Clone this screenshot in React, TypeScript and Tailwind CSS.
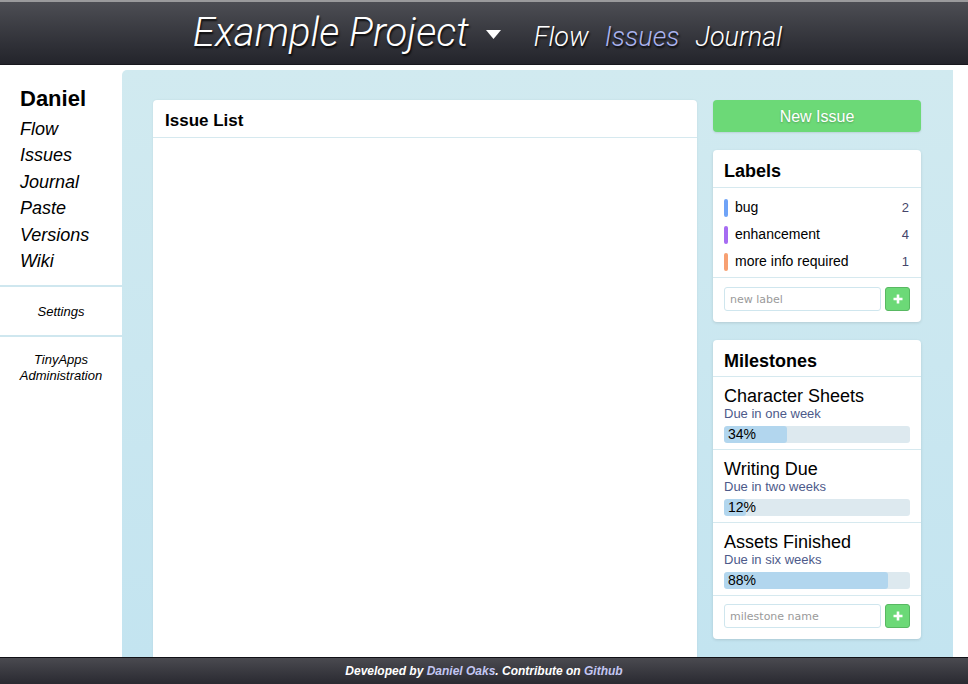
import * as React from 'react';

const labels = [
    { name: 'bug', count: 2, color: 'bg-[#6fa3f7]' },
    { name: 'enhancement', count: 4, color: 'bg-[#a66cf2]' },
    { name: 'more info required', count: 1, color: 'bg-[#f7a072]' },
];

const milestones = [
    { name: 'Character Sheets', due: 'Due in one week', pct: 34 },
    { name: 'Writing Due', due: 'Due in two weeks', pct: 12 },
    { name: 'Assets Finished', due: 'Due in six weeks', pct: 88 },
];

const sideLinks = ['Flow', 'Issues', 'Journal', 'Paste', 'Versions', 'Wiki'];

function PlusButton() {
    return (
        <button className="w-[25px] h-[24px] rounded-[3px] bg-[#6cd977] border border-[#58b862] flex items-center justify-center">
            <svg width="12" height="12" viewBox="0 0 12 12">
                <path d="M6 1.5v9M1.5 6h9" stroke="white" strokeWidth="2.6" strokeLinecap="butt" />
            </svg>
        </button>
    );
}

function AddRow({ placeholder, tight }: { placeholder: string; tight?: boolean }) {
    return (
        <div className={tight ? "flex items-center gap-[4px] px-[11px] pt-[8px] pb-[11px]" : "flex items-center gap-[4px] px-[11px] pt-[9px] pb-[11px]"}>
            <input
                placeholder={placeholder}
                className="w-[158px] h-[24px] rounded-[3px] border border-[#cfe6ee] px-[5px] text-[11px] font-['DejaVu_Sans',sans-serif] placeholder:text-[#9a9a9a] outline-none"
            />
            <PlusButton />
        </div>
    );
}

export default function App() {
    return (
        <div className="h-[684px] w-[968px] flex flex-col overflow-hidden bg-white font-['Liberation_Sans',Arial,sans-serif] text-black">
            {/* top bar */}
            <header className="h-[65px] shrink-0 border-t-2 border-[#9a9a9c] bg-gradient-to-b from-[#4d4e54] to-[#23242b] border-b border-b-[#18181e] flex items-center justify-center">
                <div className="flex items-baseline ml-[7px] [text-shadow:1px_2px_2px_rgba(0,0,0,0.85)]">
                    <span className="font-['Roboto',sans-serif] font-light italic text-[40px] text-white">Example Project</span>
                    <svg className="ml-[17px] mr-[33px] self-center mt-[4px]" width="15" height="10" viewBox="0 0 15 10">
                        <path d="M0 0h15L7.5 9z" fill="white" />
                    </svg>
                    <nav className="flex gap-[16px] font-['Roboto',sans-serif] font-light italic text-[27px]">
                        <span className="text-white">Flow</span>
                        <span className="text-[#aab3ee]">Issues</span>
                        <span className="text-white">Journal</span>
                    </nav>
                </div>
            </header>

            <div className="flex flex-1 min-h-0">
                {/* sidebar */}
                <aside className="w-[122px] shrink-0 pt-[20px]">
                    <div className="px-[20px]">
                        <div className="font-bold text-[22px] leading-[28px]">Daniel</div>
                        <ul className="mt-[3px] italic text-[18px] leading-[26.4px]">
                            {sideLinks.map((l) => (
                                <li key={l}>{l}</li>
                            ))}
                        </ul>
                    </div>
                    <div className="mt-[11px] h-[2px] bg-[#cfe7ef]" />
                    <div className="h-[48px] flex items-center justify-center italic text-[13px]">Settings</div>
                    <div className="h-[2px] bg-[#cfe7ef]" />
                    <div className="pt-[15px] text-center italic text-[13px] leading-[16px]">
                        TinyApps
                        <br />
                        Administration
                    </div>
                </aside>

                {/* main */}
                <main className="mt-[5px] w-[831px] rounded-tl-[5px] bg-gradient-to-b from-[#d1eaf0] to-[#c3e4f0] pl-[31px] pr-[32px] pt-[30px] flex gap-[16px]">
                    <section className="w-[544px] shrink-0 h-[700px] bg-white rounded-t-[4px] shadow-[0_0_2px_rgba(0,0,0,0.08)]">
                        <h2 className="h-[38px] border-b border-[#d6e9ef] px-[12px] pt-[4px] flex items-center font-bold text-[17px]">Issue List</h2>
                    </section>

                    <div className="w-[208px] shrink-0 flex flex-col">
                        <button className="h-[32px] pt-[1px] rounded-[4px] bg-[#6cd977] text-white text-[16px] shadow-[0_1px_2px_rgba(0,0,0,0.1)] [text-shadow:0_1px_2px_rgba(0,0,0,0.25)]">
                            New Issue
                        </button>

                        <div className="mt-[18px] bg-white rounded-[4px] shadow-[0_1px_3px_rgba(0,0,0,0.12)]">
                            <h3 className="h-[38px] border-b border-[#d6e9ef] px-[11px] pt-[5px] flex items-center font-bold text-[18px]">Labels</h3>
                            <ul className="pt-[6px] pb-[2px] border-b border-[#d6e9ef]">
                                {labels.map((l) => (
                                    <li key={l.name} className="h-[27px] flex items-center px-[11px] text-[14px]">
                                        <span className={`w-[4px] h-[18px] rounded-[2px] ${l.color}`} />
                                        <span className="ml-[7px] flex-1">{l.name}</span>
                                        <span className="text-[13px] text-[#45456a] pr-[1px]">{l.count}</span>
                                    </li>
                                ))}
                            </ul>
                            <AddRow placeholder="new label" />
                        </div>

                        <div className="mt-[18px] bg-white rounded-[4px] shadow-[0_1px_3px_rgba(0,0,0,0.12)]">
                            <h3 className="h-[37px] border-b border-[#d6e9ef] px-[11px] pt-[6px] flex items-center font-bold text-[18px]">Milestones</h3>
                            {milestones.map((m) => (
                                <div key={m.name} className="h-[73px] border-b border-[#d6e9ef] px-[11px] pt-[9px]">
                                    <div className="text-[18px] leading-[20px]">{m.name}</div>
                                    <div className="text-[13px] leading-[16px] text-[#4d5a8a]">{m.due}</div>
                                    <div className="relative mt-[4px] h-[17px] rounded-[3px] bg-[#dde9ef] overflow-hidden">
                                        <div className="h-full rounded-[3px] bg-[#b2d6ee]" style={{ width: `${m.pct}%` }} />
                                        <span className="absolute left-[4px] top-0 text-[14px] leading-[17px]">{m.pct}%</span>
                                    </div>
                                </div>
                            ))}
                            <AddRow placeholder="milestone name" tight />
                        </div>
                    </div>
                </main>
            </div>

            {/* footer */}
            <footer className="h-[27px] shrink-0 border-t border-[#111116] bg-gradient-to-b from-[#4a4a50] to-[#2a2a31] flex items-center justify-center text-[12px] font-bold italic text-white">
                <span>
                    Developed by <span className="text-[#c3c6f2]">Daniel Oaks</span>. Contribute on{' '}
                    <span className="text-[#c3c6f2]">Github</span>
                </span>
            </footer>
        </div>
    );
}
